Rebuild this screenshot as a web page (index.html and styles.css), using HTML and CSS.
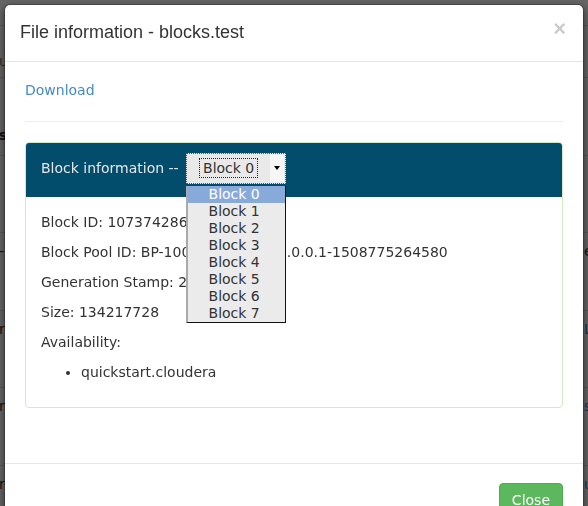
FILE: index.html
```html
<!DOCTYPE html>
<html>
<head>
<meta charset="utf-8">
<title>File information</title>
<link rel="stylesheet" href="styles.css">
</head>
<body>
<div class="page">
  <div class="bg-head"></div>
  <div class="bg-row bg-first"><span class="bg-l muted">u</span><span class="bg-r"></span></div>
  <div class="bg-row bg-tall"><span class="bg-l strong">s</span><span class="bg-r"></span></div>
  <div class="bg-row"><span class="bg-l"></span><span class="bg-r"></span></div>
  <div class="bg-row"><span class="bg-l">-</span><span class="bg-r">e</span></div>
  <div class="bg-row"><span class="bg-l">r</span><span class="bg-r link">L</span></div>
  <div class="bg-row"><span class="bg-l">r</span><span class="bg-r link">s</span></div>
  <div class="bg-row"><span class="bg-l">r</span><span class="bg-r link">u</span></div>
</div>
<div class="backdrop"></div>

<div class="modal">
  <div class="modal-header">
    <span class="close">&times;</span>
    <h4 class="modal-title">File information - blocks.test</h4>
  </div>
  <div class="modal-body">
    <a class="download" href="#">Download</a>
    <hr class="divider">
    <div class="panel">
      <div class="panel-heading">
        <span class="panel-title">Block information --</span>
        <div class="select-wrap">
          <div class="fselect">
            <div class="fselect-label"><span>Block 0</span></div>
            <div class="fselect-btn"><i class="caret"></i></div>
          </div>
          <ul class="options">
            <li class="selected">Block 0</li>
            <li>Block 1</li>
            <li>Block 2</li>
            <li>Block 3</li>
            <li>Block 4</li>
            <li>Block 5</li>
            <li>Block 6</li>
            <li>Block 7</li>
          </ul>
        </div>
      </div>
      <div class="panel-body">
        <p>Block ID: 1073742866</p>
        <p>Block Pool ID: BP-10<span class="pool-mid">02838720-127</span>.0.0.1-1508775264580</p>
        <p>Generation Stamp: 2042</p>
        <p>Size: 134217728</p>
        <p>Availability:</p>
        <ul class="avail">
          <li>quickstart.cloudera</li>
        </ul>
      </div>
    </div>
  </div>
  <div class="modal-footer">
    <button class="btn-close">Close</button>
  </div>
</div>
</body>
</html>
```
FILE: styles.css
```css
html, body {
  margin: 0;
  padding: 0;
  background: #fff;
  overflow: hidden;
}
body {
  font-family: "DejaVu Sans", sans-serif;
  font-size: 14px;
  line-height: 20px;
  color: #333;
  width: 588px;
  height: 506px;
}

/* background page */
.page {
  width: 588px;
}
.bg-head {
  height: 25px;
  border-bottom: 1px solid #ddd;
}
.bg-row {
  display: grid;
  grid-template-columns: 584px 1fr;
  height: 77.5px;
  box-sizing: border-box;
  border-bottom: 1px solid #ddd;
  padding-top: 8px;
  overflow: hidden;
}
.bg-first {
  height: 52px;
  padding-top: 25px;
}
.bg-tall {
  padding-top: 47px;
}
.bg-l {
  margin-left: -1px;
  color: #333;
}
.bg-l.muted { color: #777; }
.bg-l.strong { font-weight: bold; }
.bg-r { color: #333; }
.bg-r.link { color: #428bca; }

.backdrop {
  position: fixed;
  left: 0;
  top: 0;
  right: 0;
  bottom: 0;
  background: rgba(0, 0, 0, 0.6);
}

/* modal */
.modal {
  position: absolute;
  left: 4px;
  top: 4px;
  width: 580px;
  box-sizing: border-box;
  background: #fff;
  border: 1px solid rgba(0, 0, 0, 0.2);
  border-radius: 6px;
  box-shadow: 0 3px 9px rgba(0, 0, 0, 0.5);
  background-clip: padding-box;
}
.modal-header {
  padding: 15px;
  border-bottom: 1px solid #e5e5e5;
}
.modal-title {
  margin: 0;
  font-family: "Liberation Sans", Arial, sans-serif;
  font-size: 18px;
  font-weight: normal;
  line-height: 25.7px;
  color: #333;
}
.close {
  float: right;
  margin-top: -2px;
  margin-right: 2px;
  font-family: "Liberation Sans", Arial, sans-serif;
  font-size: 22px;
  font-weight: bold;
  line-height: 1;
  color: #000;
  opacity: 0.2;
}
.modal-body {
  padding: 20px;
}
.download {
  display: block;
  color: #428bca;
  text-decoration: none;
  line-height: 17px;
}
.divider {
  margin: 22px 0 20px;
  border: 0;
  border-top: 1px solid #eee;
  height: 0;
}

.panel {
  border: 1px solid #d6e9c6;
  border-radius: 4px;
  margin-bottom: 20px;
}
.panel-heading {
  display: flex;
  align-items: flex-start;
  height: 54px;
  box-sizing: border-box;
  padding: 10px 15px;
  background: #024d6c;
  border-radius: 3px 3px 0 0;
}
.panel-title {
  color: #e6e6e6;
  line-height: 30px;
}
.select-wrap {
  position: relative;
  margin-left: 7px;
}
.fselect {
  display: flex;
  width: 100px;
  height: 31px;
  box-sizing: border-box;
  border: 1px dotted #555;
  background: #e9e9e9;
  padding: 1px;
}
.fselect-label {
  flex: 1;
  display: flex;
  align-items: center;
  justify-content: center;
}
.fselect-label span {
  border: 1px dotted #222;
  padding: 0 3px;
  line-height: 18px;
  color: #333;
}
.fselect-btn {
  width: 14px;
  background: #f6f6f6;
  display: flex;
  align-items: center;
  justify-content: center;
}
.caret {
  width: 0;
  height: 0;
  border-left: 3px solid transparent;
  border-right: 3px solid transparent;
  border-top: 4px solid #000;
}
.options {
  position: absolute;
  left: 0;
  top: 33px;
  width: 100px;
  box-sizing: border-box;
  margin: 0;
  padding: 0;
  list-style: none;
  background: #ebebeb;
  border-left: 2px solid #aaa;
  border-right: 1px solid #111;
  border-bottom: 1px solid #111;
  z-index: 2;
}
.options li {
  height: 17px;
  line-height: 17px;
  text-align: center;
  padding-right: 4px;
  color: #333;
}
.options li.selected {
  background: #88aadb;
  color: #fff;
}

.panel-body {
  padding: 15px;
}
.panel-body p {
  margin: 0 0 10px;
}
.pool-mid {
  letter-spacing: 0.2px;
}
.avail {
  margin: 0 0 10px;
  padding-left: 40px;
}

.modal-footer {
  margin-top: 15px;
  padding: 19px 20px 20px;
  border-top: 1px solid #e5e5e5;
  text-align: right;
}
.btn-close {
  font-family: "DejaVu Sans", sans-serif;
  font-size: 14px;
  line-height: 20px;
  padding: 6px 12px;
  color: #fff;
  background: #5cb85c;
  border: 1px solid #4cae4c;
  border-radius: 4px;
}
```
